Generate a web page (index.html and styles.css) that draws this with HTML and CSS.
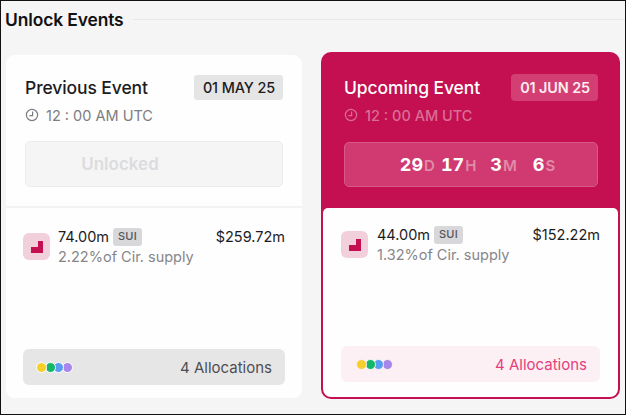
FILE: index.html
```html
<!DOCTYPE html>
<html lang="en">
<head>
<meta charset="utf-8">
<title>Unlock Events</title>
<link rel="stylesheet" href="styles.css">
</head>
<body>
<main class="frame">
  <header class="heading">
    <h1>Unlock Events</h1>
    <div class="rule"></div>
  </header>
  <section class="cards">
    <article class="card prev">
      <div class="top">
        <div class="title-row">
          <h2>Previous Event</h2>
          <span class="date">01 MAY 25</span>
        </div>
        <div class="time">
          <svg viewBox="0 0 14 14" class="clock"><circle cx="7" cy="7" r="5.6"/><path d="M7.6 3.6V7.6H4.4"/></svg>
          <span>12 : 00 AM UTC</span>
        </div>
        <div class="status"><span class="status-text">Unlocked</span></div>
      </div>
      <div class="body">
        <div class="row">
          <span class="token"><svg viewBox="0 0 12 12"><path d="M7 0H12V12H0V6H7Z"/></svg></span>
          <div class="info">
            <div class="amount">74.00m <span class="tag">SUI</span></div>
            <div class="supply">2.22%of Cir. supply</div>
          </div>
          <div class="usd">$259.72m</div>
        </div>
        <div class="alloc">
          <span class="dots"><i class="y"></i><i class="g"></i><i class="b"></i><i class="p"></i></span>
          <span>4 Allocations</span>
        </div>
      </div>
    </article>
    <article class="card next">
      <div class="top">
        <div class="title-row">
          <h2>Upcoming Event</h2>
          <span class="date">01 JUN 25</span>
        </div>
        <div class="time">
          <svg viewBox="0 0 14 14" class="clock"><circle cx="7" cy="7" r="5.6"/><path d="M7.6 3.6V7.6H4.4"/></svg>
          <span>12 : 00 AM UTC</span>
        </div>
        <div class="status count">
          <span class="unit"><b>29</b><small>D</small></span>
          <span class="unit"><b>17</b><small>H</small></span>
          <span class="unit wide"><b>3</b><small>M</small></span>
          <span class="unit wide"><b>6</b><small>S</small></span>
        </div>
      </div>
      <div class="body">
        <div class="row">
          <span class="token"><svg viewBox="0 0 12 12"><path d="M7 0H12V12H0V6H7Z"/></svg></span>
          <div class="info">
            <div class="amount">44.00m <span class="tag">SUI</span></div>
            <div class="supply">1.32%of Cir. supply</div>
          </div>
          <div class="usd">$152.22m</div>
        </div>
        <div class="alloc">
          <span class="dots"><i class="y"></i><i class="g"></i><i class="b"></i><i class="p"></i></span>
          <span>4 Allocations</span>
        </div>
      </div>
    </article>
  </section>
</main>
</body>
</html>
```
FILE: styles.css
```css
* { box-sizing: border-box; }
html, body { margin: 0; height: 100%; }
body { font-family: Inter, "Liberation Sans", sans-serif; color: #1c1c1e; }
h1, h2 { margin: 0; font-weight: 500; }

.frame {
  width: 626px;
  height: 415px;
  background: #f5f5f6;
  border: 1px solid #111;
  overflow: hidden;
  display: flex;
  flex-direction: column;
}
.heading {
  height: 36px;
  padding-left: 4px;
  display: flex;
  align-items: center;
  gap: 9px;
}
h1 { font-size: 17.4px; font-weight: 600; letter-spacing: -0.1px; color: #111; }
.rule { flex: 1; height: 1px; background: #e9e9ea; }

.cards { display: flex; padding-left: 5px; gap: 19px; margin-top: 15px; }
.card { display: flex; flex-direction: column; border-radius: 9px; }
.prev { background: #fefefe; margin-top: 3px; height: 343px; width: 296px; }
.next { background: #c40f50; height: 347px; border: 2px solid #c40f50; width: 299px; border-radius: 10px; }

.top { height: 153px; }
.prev .top { border-bottom: 2px solid #f3f3f4; padding: 20px 19px 0; }
.next .top { height: 154px; padding: 20px 20px 0 21px; color: #fff; }

.title-row { display: flex; justify-content: space-between; align-items: center; }
h2 { font-size: 17.5px; letter-spacing: -0.1px; }
.date {
  font-size: 14.4px;
  font-weight: 500;
  height: 25px;
  line-height: 25px;
  padding: 0 8px 0 9px;
  border-radius: 3px;
  background: #e6e5e6;
  letter-spacing: -0.1px;
}
.next .date { height: 27px; line-height: 27px; border-radius: 4px; background: #d33f73; color: #fdeef3; font-weight: 600; }

.time { display: flex; align-items: center; gap: 7px; margin-top: 5px; font-size: 14.5px; color: #7d7d80; height: 20px; }
.next .time { margin-top: 4px; color: #da6e95; font-weight: 500; }
.clock { width: 14px; height: 14px; fill: none; stroke: currentColor; stroke-width: 1.2; }

.status {
  margin-top: 16px;
  height: 46px;
  border-radius: 5px;
  background: #f5f5f6;
  border: 1px solid #ececed;
  display: flex;
  align-items: center;
  justify-content: center;
  padding-right: 68px;
  font-size: 17px;
  font-weight: 600;
}
.status-text { color: #dcdcde; }

.next .status.count {
  margin-top: 17px;
  height: 45px;
  background: #d03a70;
  border-color: #d9588a;
  justify-content: center;
  padding: 0 0 0 21px;
}
.unit { display: inline-flex; align-items: baseline; margin-right: 6px; font-variant-numeric: tabular-nums; }
.unit.wide { margin-left: 8px; margin-right: 8px; }
.unit b { font-size: 18px; font-weight: 700; color: #fff; }
.unit small { font-size: 15px; font-weight: 600; color: #e18aa9; margin-left: 1px; }

.body {
  flex: 1;
  display: flex;
  flex-direction: column;
  justify-content: space-between;
  background: #fefefe;
}
.prev .body { padding: 19px 17px 13px; border-radius: 0 0 9px 9px; }
.next .body { padding: 17px 18px 15px; border-radius: 5px 5px 8px 8px; }
.row { display: flex; align-items: flex-start; font-size: 14.5px; }
.token {
  flex: none;
  width: 27px;
  height: 27px;
  margin: 6px 8px 0 0;
  border-radius: 6px;
  background: #f1cfdb;
  display: flex;
  align-items: center;
  justify-content: center;
}
.next .token { margin-right: 9px; }
.token svg { width: 12px; height: 12px; fill: #c40f50; }
.info { flex: 1; }
.amount { display: flex; align-items: center; gap: 4px; height: 19px; }
.tag {
  font-size: 11px;
  font-weight: 500;
  color: #55555a;
  background: #d8d7d9;
  border-radius: 3px;
  padding: 0 5px;
  height: 18px;
  line-height: 17px;
  letter-spacing: 0.2px;
}
.supply { color: #86868a; margin-top: 2px; }
.usd { height: 19px; line-height: 19px; }

.alloc {
  height: 36px;
  border-radius: 6px;
  background: #e7e6e7;
  color: #4e4e52;
  font-size: 15px;
  display: flex;
  align-items: center;
  justify-content: space-between;
  padding: 0 13px;
}
.next .alloc { background: #fdf0f4; color: #e2417c; padding-left: 15px; }
.dots { display: flex; }
.dots i {
  position: relative;
  box-sizing: content-box;
  width: 9px;
  height: 9px;
  border-radius: 50%;
  border: 1.5px solid #fff;
  margin-right: -2.5px;
}
.next .dots i { border-color: #fdf0f4; }
.dots .y { background: #f7cf2b; z-index: 4; }
.dots .g { background: #12b76a; z-index: 3; }
.dots .b { background: #5b9cf0; z-index: 2; }
.dots .p { background: #a886ea; z-index: 1; }
```
